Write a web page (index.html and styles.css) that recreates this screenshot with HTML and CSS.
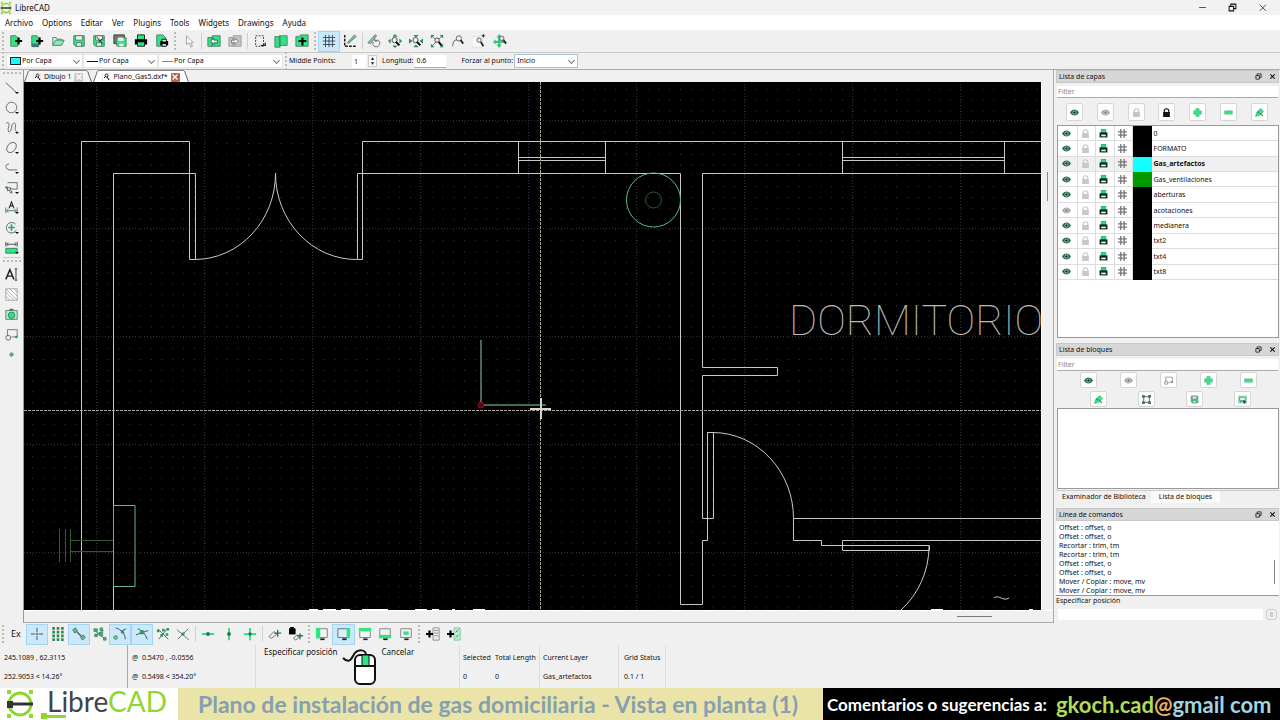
FILE: index.html
```
<!DOCTYPE html>
<html lang="es">
<head>
    <meta charset="UTF-8">
    <meta name="viewport" content="width=device-width, initial-scale=1">
    <title>LibreCAD</title>
    <link rel="stylesheet" href="styles.css">
</head>
<body>

    <!-- Icon set -->
    <svg class="sprite" aria-hidden="true">
        <symbol id="i-logo" viewBox="0 0 16 16"><circle cx="8" cy="8" r="6" fill="none" stroke="#8fd62f" stroke-width="2"/><path d="M1 1h3M12 1h3M1 15h3M12 15h3" stroke="#8fd62f" stroke-width="2"/><path d="M1 8h14" stroke="#333" stroke-width="2"/></symbol>
        <symbol id="i-new" viewBox="0 0 16 16"><path d="M2 2h6l2 2v10H2z" fill="#2de584" stroke="#4a7a60"/><path d="M7 8h8M11 4v8" stroke="#000" stroke-width="2.4"/></symbol>
        <symbol id="i-newt" viewBox="0 0 16 16"><path d="M2 2h6l2 2v10H2z" fill="#2de584" stroke="#4a7a60"/><path d="M2 11h8v4H2z" fill="#477"/><path d="M7 8h8M11 4v8" stroke="#000" stroke-width="2.4"/></symbol>
        <symbol id="i-open" viewBox="0 0 16 16"><path d="M2 13V4h4l1 2h5v2" fill="#dff5e8" stroke="#4a7a60"/><path d="M2 13l3-6h10l-3 6z" fill="#7eeeb2" stroke="#4a7a60"/></symbol>
        <symbol id="i-save" viewBox="0 0 16 16"><path d="M2 2h12v12H4l-2-2z" fill="#2de584" stroke="#4a7a60"/><path d="M4 2h8v5H4zM5 10h6v4H5z" fill="#eee" stroke="#4a7a60"/></symbol>
        <symbol id="i-saveas" viewBox="0 0 16 16"><path d="M2 2h12v12H4l-2-2z" fill="#2de584" stroke="#4a7a60"/><path d="M4 2h8v5H4zM5 10h6v4H5z" fill="#eee" stroke="#4a7a60"/><path d="M5 3l7 8M12 5l-4 4" stroke="#222"/></symbol>
        <symbol id="i-saveall" viewBox="0 0 16 16"><path d="M1 1h12v10H1z" fill="#777" stroke="#333"/><path d="M4 4h11v10H5l-1-1z" fill="#2de584" stroke="#4a7a60"/><path d="M6 4h6v4H6zM7 11h5v3H7z" fill="#eee"/></symbol>
        <symbol id="i-print" viewBox="0 0 16 16"><path d="M4 1h8v6H4z" fill="#2de584" stroke="#111"/><path d="M1 6h14v6H1z" fill="#000"/><path d="M4 9h8v5H4z" fill="#2de584" stroke="#111"/></symbol>
        <symbol id="i-lprint" viewBox="0 0 16 16"><path d="M4 0h8v7H4z" fill="#2dd57c" stroke="#1d8a50"/><path d="M1 6h14v9H1z" fill="#0a2a18"/><path d="M4 10h8v3H4z" fill="#eafff3"/></symbol>
        <symbol id="i-preview" viewBox="0 0 16 16"><path d="M2 1h7l3 3v10H2z" fill="#2de584" stroke="#4a7a60"/><path d="M6 8h9v5H6z" fill="#000"/><path d="M8 6h5v3H8zM8 11h5v3H8z" fill="#d8ffe8" stroke="#000"/></symbol>
        <symbol id="i-arrow" viewBox="0 0 16 16"><path d="M5 2v10l3-2 2 5 2-1-2-4h3z" fill="#fff" stroke="#999"/></symbol>
        <symbol id="i-undo" viewBox="0 0 16 16"><path d="M1 4h5v10H1zM6 2h9v12H6z" fill="#2de584" stroke="#4a7a60"/><path d="M4 8l4-3v2h4v3H8v2z" fill="#fff" stroke="#356"/></symbol>
        <symbol id="i-redo" viewBox="0 0 16 16"><path d="M1 4h5v10H1zM6 2h9v12H6z" fill="#c4c4c4" stroke="#999"/><path d="M12 8L8 5v2H4v3h4v2z" fill="#eee" stroke="#777"/></symbol>
        <symbol id="i-cut" viewBox="0 0 16 16"><path d="M3 2h9v12H3z" fill="none" stroke="#222" stroke-dasharray="2 1.5"/><path d="M9 13h5v-3" fill="none" stroke="#222" stroke-width="1.5"/></symbol>
        <symbol id="i-copy" viewBox="0 0 16 16"><path d="M1 3h6v12H1zM6 2h9v11H6z" fill="#2de584" stroke="#4a7a60"/></symbol>
        <symbol id="i-paste" viewBox="0 0 16 16"><path d="M1 3h4l1-2h9v13H1z" fill="#2de584" stroke="#4a7a60"/><path d="M4 8h9M8.500 4v9" stroke="#000" stroke-width="2.4"/></symbol>
        <symbol id="i-grid" viewBox="0 0 16 16"><path d="M4 1v14M8 1v14M12 1v14M1 4h14M1 8h14M1 12h14" stroke="#345" fill="none"/></symbol>
        <symbol id="i-draft" viewBox="0 0 16 16"><path d="M2 1v13h13" fill="none" stroke="#111" stroke-width="1.6" stroke-dasharray="3 1.5"/><path d="M5 10l8-9 2 2-9 8z" fill="#7ec9a0" stroke="#365" stroke-width=".8"/></symbol>
        <symbol id="i-redraw" viewBox="0 0 16 16"><path d="M1 10l8-9 2 1-7 9z" fill="#8ec9a6" stroke="#365" stroke-width=".8"/><path d="M7 9a4 4 0 1 0 5-2l-3 1M9 5v3h3" fill="none" stroke="#666"/></symbol>
        <symbol id="i-zin" viewBox="0 0 16 16"><path d="M8 0l3 3H5zM8 16l3-3H5zM0 8l3-3v6zM16 8l-3-3v6z" fill="#2c8a56"/><circle cx="7.500" cy="7" r="3" fill="#dff5e8" stroke="#444"/><path d="M9 9l4 4" stroke="#000" stroke-width="2.200"/></symbol>
        <symbol id="i-zout" viewBox="0 0 16 16"><path d="M8 4l3-3H5zM8 12l3 3H5zM4 8L0 5v6zM12 8l4-3v6z" fill="#2c8a56"/><circle cx="7.500" cy="7" r="3" fill="#eee" stroke="#444"/><path d="M9 9l4 4" stroke="#000" stroke-width="2.200"/></symbol>
        <symbol id="i-zauto" viewBox="0 0 16 16"><path d="M2 2l12 12M14 2L2 14" stroke="#567"/><path d="M1 1h4L1 5zM15 1v4l-4-4zM1 15v-4l4 4zM15 15h-4l4-4z" fill="#2c8a56"/><circle cx="8" cy="7" r="2.500" fill="#eee" stroke="#444"/><path d="M10 9l3 4" stroke="#000" stroke-width="2"/></symbol>
        <symbol id="i-zprev" viewBox="0 0 16 16"><path d="M2 14c0-6 2-8 7-7" fill="none" stroke="#555"/><circle cx="9" cy="5" r="3" fill="#eee" stroke="#555"/><path d="M11 7l3 4" stroke="#222" stroke-width="2"/></symbol>
        <symbol id="i-zwin" viewBox="0 0 16 16"><path d="M0 3h12v12H0z" fill="#fafafa" stroke="#ddd"/><circle cx="8" cy="7" r="2.500" fill="#eee" stroke="#555"/><path d="M10 9l3 5" stroke="#222" stroke-width="2"/><path d="M13 0v4M11 2h4" stroke="#222"/></symbol>
        <symbol id="i-zpan" viewBox="0 0 16 16"><path d="M7 2v12M1 9h12" stroke="#32c777" stroke-width="2.400"/><path d="M7 0l3 4H4zM7 16l3-4H4zM0 9l3-3v6z" fill="#32c777"/><circle cx="10" cy="5" r="2.500" fill="#eee" stroke="#555"/><path d="M12 7l3 4" stroke="#222" stroke-width="2"/></symbol>

        <symbol id="i-line" viewBox="0 0 16 16"><path d="M1 2l13 12" stroke="#444"/></symbol>
        <symbol id="i-circle" viewBox="0 0 16 16"><circle cx="8" cy="8" r="6.500" fill="none" stroke="#555"/></symbol>
        <symbol id="i-spline" viewBox="0 0 16 16"><path d="M1 3c4-3 5 1 3 6-1 6 3 6 4 0 0-7 5-9 5-3-1 5 0 7 2 7" fill="none" stroke="#555"/></symbol>
        <symbol id="i-ellipse" viewBox="0 0 16 16"><ellipse cx="8" cy="8" rx="7" ry="5" transform="rotate(-50 8 8)" fill="none" stroke="#555"/></symbol>
        <symbol id="i-poly" viewBox="0 0 16 16"><path d="M5 4c-5-1-5 6 0 7h10" fill="none" stroke="#555"/></symbol>
        <symbol id="i-select" viewBox="0 0 16 16"><path d="M3 2h12v8H8" fill="none" stroke="#555"/><path d="M3 8l5 1-2 1 3 4-2 1-2-4-2 1z" fill="#fff" stroke="#444"/><circle cx="2" cy="8" r="1.600" fill="#2c8a56"/></symbol>
        <symbol id="i-dim" viewBox="0 0 16 16"><path d="M1 8v7M15 8v7M2 12h12M4 10l-2 2 2 2M12 10l2 2-2 2" fill="none" stroke="#3f6c54"/><path d="M5 9l3-8 3 8M6 6h4" fill="none" stroke="#222" stroke-width="1.300"/></symbol>
        <symbol id="i-modify" viewBox="0 0 16 16"><path d="M13 4a6.500 6.500 0 1 0 1 7" fill="none" stroke="#456"/><path d="M8 4v8M4 8h8" stroke="#29a864" stroke-width="2"/></symbol>
        <symbol id="i-info" viewBox="0 0 16 16"><path d="M1 1v6M15 1v6M2 4h12M4 2L2 4l2 2M12 2l2 2-2 2" fill="none" stroke="#333"/><path d="M1 9h14v6H1z" fill="#2de584" stroke="#287a4c"/></symbol>
        <symbol id="i-mtext" viewBox="0 0 16 16"><path d="M1 14L6 2l5 12M3 10h6" fill="none" stroke="#222" stroke-width="1.800"/><path d="M12 1h3M12 15h3M13.500 1v14" stroke="#222"/></symbol>
        <symbol id="i-hatch" viewBox="0 0 16 16"><path d="M1 1h14v14H1z" fill="#fff" stroke="#999"/><path d="M1 5l10 10M1 10l5 5M1 1l14 14M6 1l9 9M11 1l4 4" stroke="#999"/></symbol>
        <symbol id="i-image" viewBox="0 0 16 16"><path d="M1 3h14v11H1z" fill="#bde8cf" stroke="#4a7a60"/><path d="M5 3l1-2h4l1 2z" fill="#4a7a60"/><circle cx="8" cy="9" r="4" fill="#2de584" stroke="#277a4b"/></symbol>
        <symbol id="i-block" viewBox="0 0 16 16"><path d="M3 10V2h12v9H8" fill="none" stroke="#666"/><circle cx="4" cy="12" r="3" fill="#eee" stroke="#555"/><circle cx="14" cy="11" r="1.600" fill="#2c9a5c"/></symbol>
        <symbol id="i-point" viewBox="0 0 16 16"><circle cx="8" cy="8" r="2" fill="#5fc592" stroke="#287a4c"/></symbol>

        <symbol id="i-eye" viewBox="0 0 16 16"><path d="M0 8c4-7 12-7 16 0-4 7-12 7-16 0z" fill="#2a6b45"/><circle cx="8" cy="8" r="3.400" fill="#b9e8cd"/><circle cx="8" cy="8" r="2.200" fill="#123"/></symbol>
        <symbol id="i-eyeoff" viewBox="0 0 16 16"><path d="M0 8c4-7 12-7 16 0-4 7-12 7-16 0z" fill="#aaa"/><circle cx="8" cy="8" r="3.400" fill="#ddd"/><circle cx="8" cy="8" r="2.200" fill="#777"/></symbol>
        <symbol id="i-lock" viewBox="0 0 16 16"><path d="M2 7h12v9H2z" fill="currentColor"/><path d="M4 8V5c0-5 8-5 8 0v3" fill="none" stroke="currentColor" stroke-width="2"/></symbol>
        <symbol id="i-plus" viewBox="0 0 16 16"><path d="M5 1h6v4h4v6h-4v4H5v-4H1V5h4z" fill="#2de584" stroke="#6fb890"/></symbol>
        <symbol id="i-minus" viewBox="0 0 16 16"><path d="M1 5h14v6H1z" fill="#2de584" stroke="#6fb890"/></symbol>
        <symbol id="i-edit" viewBox="0 0 16 16"><path d="M1 15l2-7 7-7 5 5-7 7z" fill="#2de584" stroke="#3a9a68"/><path d="M9 9l5 5M4 6l3 3" stroke="#2c8a56" stroke-width="2"/></symbol>
        <symbol id="i-hash" viewBox="0 0 16 16"><path d="M5 0v16M11 0v16M0 5h16M0 11h16" stroke="#777" stroke-width="2.400"/></symbol>
        <symbol id="i-frame" viewBox="0 0 16 16"><path d="M3 3h10v10H3z" fill="none" stroke="#555" stroke-width="1.500"/><path d="M0 0h5v5H0zM11 0h5v5h-5zM0 11h5v5H0zM11 11h5v5h-5z" fill="#4a7a60"/></symbol>
        <symbol id="i-insert" viewBox="0 0 16 16"><path d="M0 1h16v14H0z" fill="#8fe8b8"/><path d="M3 4h10v6H3z" fill="#eee" stroke="#456"/><path d="M3 12h4M9 10l5 2-3 3z" stroke="#345"/></symbol>

        <symbol id="i-cross" viewBox="0 0 16 16"><path d="M8 1v14M1 8h14" stroke="#345" stroke-dasharray="5 1 2 1"/></symbol>
        <symbol id="i-dots" viewBox="0 0 16 16"><path d="M3 0v16M8 0v16M13 0v16" stroke="#2c8a56" stroke-width="3" stroke-dasharray="3 1.300"/></symbol>
        <symbol id="i-ends" viewBox="0 0 16 16"><path d="M4 4l8 8" stroke="#456" stroke-width="1.500"/><path d="M1 3l3-2 2 3-3 3zM10 12l3-3 2 3-3 3z" fill="#69c594" stroke="#287a4c"/></symbol>
        <symbol id="i-entity" viewBox="0 0 16 16"><path d="M1 3l13 11M4 9l8-5" stroke="#456"/><path d="M1 2h4v3H1zM7 6h4v4H7zM2 8h3v3H2zM12 12h3v3h-3zM8 1h3v3H8z" fill="#3bb574" stroke="#287a4c" stroke-width=".7"/></symbol>
        <symbol id="i-center" viewBox="0 0 16 16"><path d="M3 1c7 2 11 7 11 13M9 5l6-3" fill="none" stroke="#345"/><circle cx="3" cy="12" r="2" fill="#83d6a9" stroke="#287a4c"/><circle cx="11" cy="6" r="1.800" fill="#2c9a5c"/></symbol>
        <symbol id="i-middle" viewBox="0 0 16 16"><path d="M3 2c5 2 9 6 11 12M1 9l14-5" fill="none" stroke="#345"/><circle cx="8" cy="6" r="2.500" fill="#2c9a5c"/></symbol>
        <symbol id="i-dist" viewBox="0 0 16 16"><path d="M2 2l12 12M3 14L13 2" stroke="#456"/><path d="M1 3h3v3H1zM7 2h3v3H7zM5 8h3v3H5zM11 7h3v3h-3zM12 1h3v3h-3z" fill="#2c9a5c"/></symbol>
        <symbol id="i-inter" viewBox="0 0 16 16"><path d="M1 3l14 12M14 2L2 14" stroke="#666"/><circle cx="8" cy="8" r="2" fill="#2c9a5c"/></symbol>
        <symbol id="i-horiz" viewBox="0 0 16 16"><path d="M1 8h14" stroke="#2fd67d" stroke-width="2"/><circle cx="8" cy="8" r="2.200" fill="#277a4b"/></symbol>
        <symbol id="i-vert" viewBox="0 0 16 16"><path d="M8 1v14" stroke="#2fd67d" stroke-width="2"/><circle cx="8" cy="8" r="2.200" fill="#277a4b"/></symbol>
        <symbol id="i-ortho" viewBox="0 0 16 16"><path d="M8 1v14M1 8h14" stroke="#2fd67d" stroke-width="2"/><circle cx="8" cy="8" r="2" fill="#277a4b"/></symbol>
        <symbol id="i-relzero" viewBox="0 0 16 16"><path d="M1 11l6-6 3 3-6 5z" fill="#eee" stroke="#666"/><path d="M7 7h8M11 3v8" stroke="#277a4b" stroke-width="1.600"/></symbol>
        <symbol id="i-lockzero" viewBox="0 0 16 16"><path d="M0 2h7v6H0zM2 2V0h3v2" fill="#000" stroke="#000"/><path d="M5 13l4-4 3 2-4 4z" fill="#eee" stroke="#666"/><path d="M9 10h7M12.500 7v7" stroke="#277a4b" stroke-width="1.600"/></symbol>
        <symbol id="i-dleft" viewBox="0 0 16 16"><path d="M2 2h12v10H2z" fill="#f4f4f4" stroke="#777"/><path d="M1 1h5v12H1z" fill="#2de584"/><path d="M6 14h5" stroke="#222" stroke-width="2"/></symbol>
        <symbol id="i-dright" viewBox="0 0 16 16"><path d="M1 2h13v10H1z" fill="#dfeefa" stroke="#567"/><path d="M11 1h4v12h-4z" fill="#2de584"/><path d="M6 14h5" stroke="#222" stroke-width="2"/></symbol>
        <symbol id="i-dtop" viewBox="0 0 16 16"><path d="M2 2h12v10H2z" fill="#f4f4f4" stroke="#777"/><path d="M1 1h14v4H1z" fill="#2de584"/><path d="M6 14h5" stroke="#222" stroke-width="2"/></symbol>
        <symbol id="i-dbottom" viewBox="0 0 16 16"><path d="M2 2h12v10H2z" fill="#f4f4f4" stroke="#777"/><path d="M1 9h14v4H1z" fill="#2de584"/><path d="M6 14h5" stroke="#222" stroke-width="2"/></symbol>
        <symbol id="i-dfloat" viewBox="0 0 16 16"><path d="M2 2h12v10H2z" fill="#f4f4f4" stroke="#777"/><path d="M5 5h6v4H5z" fill="#2de584"/><path d="M6 14h5" stroke="#222" stroke-width="2"/></symbol>
        <symbol id="i-addmenu" viewBox="0 0 16 16"><path d="M8 1h7v14H8z" fill="#eee" stroke="#888"/><path d="M9 4h5M9 7h5M9 10h5" stroke="#888"/><path d="M0 8h8M4 4v8" stroke="#000" stroke-width="2.500"/></symbol>
        <symbol id="i-addbar" viewBox="0 0 16 16"><path d="M8 1h7v14H8z" fill="#bdeed2" stroke="#7cc59b"/><path d="M10 6l3-3M10 12l3-3" stroke="#287a4c"/><path d="M0 8h8M4 4v8" stroke="#000" stroke-width="2.500"/></symbol>
        <symbol id="i-doc" viewBox="0 0 16 16"><path d="M1 0h13v16H1z" fill="#fff" stroke="#ccc"/><circle cx="9" cy="5" r="3" fill="#ddd" stroke="#333" stroke-width="2"/><path d="M10 8l4 6M7 7l-3 3" stroke="#000" stroke-width="2"/></symbol>
        <symbol id="i-x" viewBox="0 0 16 16"><path d="M3 3l10 10M13 3L3 13" stroke="currentColor" stroke-width="2.500"/></symbol>
        <symbol id="i-restore" viewBox="0 0 16 16"><path d="M2 6h8v8H2zM5 6V2h9v8h-4" fill="none" stroke="currentColor" stroke-width="1.800"/></symbol>
    </svg>

    <header class="titlebar">
        <svg class="app-icon"><use href="#i-logo"/></svg>
        <span>LibreCAD</span>
        <div class="window-buttons">
            <button aria-label="Minimizar"><svg viewBox="0 0 16 16"><path d="M2 8h12" stroke="#333" stroke-width="1.500"/></svg></button>
            <button aria-label="Restaurar"><svg><use href="#i-restore"/></svg></button>
            <button aria-label="Cerrar"><svg viewBox="0 0 16 16"><path d="M3 3l11 11M14 3L3 14" stroke="#333" stroke-width="1.500"/></svg></button>
        </div>
    </header>

    <nav class="menubar">
        <a href="#">Archivo</a>
        <a href="#">Options</a>
        <a href="#">Editar</a>
        <a href="#">Ver</a>
        <a href="#">Plugins</a>
        <a href="#">Tools</a>
        <a href="#">Widgets</a>
        <a href="#">Drawings</a>
        <a href="#">Ayuda</a>
    </nav>

    <div class="toolbar">
        <span class="handle"></span>
        <div class="group n8">
            <button aria-label="Nuevo"><svg><use href="#i-new"/></svg></button>
            <button aria-label="Nuevo desde plantilla"><svg><use href="#i-newt"/></svg></button>
            <button aria-label="Abrir"><svg><use href="#i-open"/></svg></button>
            <button aria-label="Guardar"><svg><use href="#i-save"/></svg></button>
            <button aria-label="Guardar como"><svg><use href="#i-saveas"/></svg></button>
            <button aria-label="Guardar todo"><svg><use href="#i-saveall"/></svg></button>
            <button aria-label="Imprimir"><svg><use href="#i-print"/></svg></button>
            <button aria-label="Vista previa"><svg><use href="#i-preview"/></svg></button>
        </div>
        <span class="handle"></span>
        <div class="group n1">
            <button aria-label="Seleccionar"><svg><use href="#i-arrow"/></svg></button>
        </div>
        <span class="sep"></span>
        <div class="group n2">
            <button aria-label="Deshacer"><svg><use href="#i-undo"/></svg></button>
            <button aria-label="Rehacer"><svg><use href="#i-redo"/></svg></button>
        </div>
        <span class="sep"></span>
        <div class="group n3">
            <button aria-label="Cortar"><svg><use href="#i-cut"/></svg></button>
            <button aria-label="Copiar"><svg><use href="#i-copy"/></svg></button>
            <button aria-label="Pegar"><svg><use href="#i-paste"/></svg></button>
        </div>
        <span class="handle"></span>
        <div class="group n2">
            <button class="on" aria-label="Rejilla"><svg><use href="#i-grid"/></svg></button>
            <button aria-label="Borrador"><svg><use href="#i-draft"/></svg></button>
        </div>
        <span class="sep"></span>
        <div class="group n7">
            <button aria-label="Redibujar"><svg><use href="#i-redraw"/></svg></button>
            <button aria-label="Acercar"><svg><use href="#i-zin"/></svg></button>
            <button aria-label="Alejar"><svg><use href="#i-zout"/></svg></button>
            <button aria-label="Zoom automático"><svg><use href="#i-zauto"/></svg></button>
            <button aria-label="Vista anterior"><svg><use href="#i-zprev"/></svg></button>
            <button aria-label="Zoom ventana"><svg><use href="#i-zwin"/></svg></button>
            <button aria-label="Desplazar"><svg><use href="#i-zpan"/></svg></button>
        </div>
    </div>

    <div class="toolbar options">
        <span class="handle"></span>
        <div class="combo color"><i class="swatch"></i><select aria-label="Color"><option>Por Capa</option></select></div>
        <div class="combo width"><i class="stroke thick"></i><select aria-label="Ancho"><option>Por Capa</option></select></div>
        <div class="combo type"><i class="stroke"></i><select aria-label="Tipo de línea"><option>Por Capa</option></select></div>
        <span class="handle"></span>
        <label class="middle" for="middle">Middle Points:</label>
        <input id="middle" type="text" value="1">
        <div class="spin"><button aria-label="Más">▲</button><button aria-label="Menos">▼</button></div>
        <label for="length">Longitud:</label>
        <input id="length" type="text" value="0.6">
        <label class="force" for="snap">Forzar al punto:</label>
        <div class="combo snap"><select id="snap"><option>Inicio</option></select></div>
    </div>

    <main class="workspace">
        <aside class="tools">
            <span class="hhandle"></span>
            <button class="more" aria-label="Línea"><svg><use href="#i-line"/></svg></button>
            <button class="more" aria-label="Círculo"><svg><use href="#i-circle"/></svg></button>
            <button class="more" aria-label="Curva"><svg><use href="#i-spline"/></svg></button>
            <button class="more" aria-label="Elipse"><svg><use href="#i-ellipse"/></svg></button>
            <button class="more" aria-label="Polilínea"><svg><use href="#i-poly"/></svg></button>
            <button class="more" aria-label="Selección"><svg><use href="#i-select"/></svg></button>
            <button class="more" aria-label="Cota"><svg><use href="#i-dim"/></svg></button>
            <button class="more" aria-label="Modificar"><svg><use href="#i-modify"/></svg></button>
            <button class="more" aria-label="Información"><svg><use href="#i-info"/></svg></button>
            <span class="hhandle second"></span>
            <button aria-label="Texto"><svg><use href="#i-mtext"/></svg></button>
            <button aria-label="Sombreado"><svg><use href="#i-hatch"/></svg></button>
            <button aria-label="Imagen"><svg><use href="#i-image"/></svg></button>
            <button aria-label="Bloque"><svg><use href="#i-block"/></svg></button>
            <button aria-label="Punto"><svg><use href="#i-point"/></svg></button>
        </aside>

        <section class="mdi">
            <div class="tabs">
                <div class="tab"><svg><use href="#i-doc"/></svg><a href="#">Dibujo 1</a><button aria-label="Cerrar Dibujo 1"><svg><use href="#i-x"/></svg></button></div>
                <div class="tab current"><svg><use href="#i-doc"/></svg><a href="#">Plano_Gas5.dxf*</a><button aria-label="Cerrar Plano_Gas5"><svg><use href="#i-x"/></svg></button></div>
            </div>
            <div class="view">
                <svg class="drawing">
                    <defs>
                        <pattern id="minor" x="8" y="7" width="10.800" height="10.800" patternUnits="userSpaceOnUse">
                            <path d="M0 0h1v1H0z" fill="#3c3c3c"/>
                        </pattern>
                        <pattern id="major" x="72" y="38" width="108" height="108" patternUnits="userSpaceOnUse">
                            <path d="M0 .5h108M.5 0v108" stroke="#303030" stroke-dasharray="1 2"/>
                        </pattern>
                    </defs>
                    <rect width="100%" height="100%" fill="url(#minor)"/>
                    <rect width="100%" height="100%" fill="url(#major)"/>
                    <g transform="translate(-24 -82)" fill="none">
                        <!-- walls -->
                        <g stroke="#c8c8c8">
                            <path d="M81.500 611V141.500H189.500V259.500H195.500V173.500H113.500V611"/>
                            <path d="M2000 141.500H362.500V259.500H357.500V173.500H680.500V604.500H702.500V540.500H707.500V432.500H713.500V518.500H702.500V375.500H777.500V367.500H702.500V173.500H2000"/>
                            <path d="M707.500 432v108"/>
                            <path d="M2000 518.500H793.500V540.500H821.500V545.500H929.500V550.500H842.500V540.500H2000"/>
                            <!-- windows -->
                            <path d="M518.500 141v32M605.500 141v32M518 157.500h87M518 160.500h87M842.500 141v32M1004.500 141v32M842 157.500h162M842 160.500h162"/>
                            <!-- door swings -->
                            <path d="M195 259.500A81 86 0 0 0 275.500 173A81 86 0 0 0 357 259.500M713 432.500A81 86 0 0 1 793.500 518.500M929 546A87 87 0 0 1 900 611"/>
                            <path d="M994 598c5-4 9 4 15 0"/>
                        </g>
                        <path d="M309 609.500h9M323 609.500h13M341 609.500h9M362 609.500h26M415 609.500h12M432 609.500h7M452 609.500h3M473 609.500h12M931 609.500h12M1029 609.500h4" stroke="#fff"/>
                        <!-- gas appliances -->
                        <g stroke="#5fb5a0"><path d="M113.500 505.500h21.500v81h-21.500z"/><circle cx="653.500" cy="200" r="27"/></g>
                        <g stroke="#2f5a35"><path d="M59.500 529v33M65.500 529v33M70.500 529v33M70 540.500h43M70 551.500h43"/><circle cx="653.500" cy="200" r="8"/></g>
                        <!-- origin and cursor -->
                        <path d="M481 340v65h65" stroke="#5c8a78" stroke-width="1.500"/>
                        <circle cx="481" cy="405" r="3" fill="#5c0010" stroke="#a01028"/>
                        <path d="M540.500 82V611M24 410.500H2000" stroke="#a8a498" stroke-dasharray="3 1"/>
                        <path d="M530 409h21M541 398v21" stroke="#d8d6c8" stroke-width="2"/>
                        <text class="room" x="789" y="335">DORMITORIO</text>
                    </g>
                </svg>
                <div class="vscroll"><i></i></div>
            </div>
            <div class="hscroll"><i></i></div>
        </section>

        <aside class="docks">
            <section class="dock layers">
                <h2>Lista de capas<span><svg><use href="#i-restore"/></svg><svg><use href="#i-x"/></svg></span></h2>
                <input type="text" placeholder="Filter" aria-label="Filtrar capas">
                <div class="dock-buttons">
                    <button aria-label="Mostrar todo"><svg><use href="#i-eye"/></svg></button>
                    <button aria-label="Ocultar todo"><svg><use href="#i-eyeoff"/></svg></button>
                    <button class="pale" aria-label="Desbloquear"><svg><use href="#i-lock"/></svg></button>
                    <button aria-label="Bloquear"><svg><use href="#i-lock"/></svg></button>
                    <button aria-label="Añadir capa"><svg><use href="#i-plus"/></svg></button>
                    <button aria-label="Quitar capa"><svg><use href="#i-minus"/></svg></button>
                    <button aria-label="Editar capa"><svg><use href="#i-edit"/></svg></button>
                </div>
                <div class="layer-list">
                    <table>
                        <tr><td><svg><use href="#i-eye"/></svg></td><td><svg><use href="#i-lock"/></svg></td><td><svg><use href="#i-lprint"/></svg></td><td><svg><use href="#i-hash"/></svg></td><td class="black"></td><td>0</td></tr>
                        <tr><td><svg><use href="#i-eye"/></svg></td><td><svg><use href="#i-lock"/></svg></td><td><svg><use href="#i-lprint"/></svg></td><td><svg><use href="#i-hash"/></svg></td><td class="black"></td><td>FORMATO</td></tr>
                        <tr class="active"><td><svg><use href="#i-eye"/></svg></td><td><svg><use href="#i-lock"/></svg></td><td><svg><use href="#i-lprint"/></svg></td><td><svg><use href="#i-hash"/></svg></td><td class="cyan"></td><td>Gas_artefactos</td></tr>
                        <tr><td><svg><use href="#i-eye"/></svg></td><td><svg><use href="#i-lock"/></svg></td><td><svg><use href="#i-lprint"/></svg></td><td><svg><use href="#i-hash"/></svg></td><td class="green"></td><td>Gas_ventilaciones</td></tr>
                        <tr><td><svg><use href="#i-eye"/></svg></td><td><svg><use href="#i-lock"/></svg></td><td><svg><use href="#i-lprint"/></svg></td><td><svg><use href="#i-hash"/></svg></td><td class="black"></td><td>aberturas</td></tr>
                        <tr><td><svg><use href="#i-eyeoff"/></svg></td><td><svg><use href="#i-lock"/></svg></td><td><svg><use href="#i-lprint"/></svg></td><td><svg><use href="#i-hash"/></svg></td><td class="black"></td><td>acotaciones</td></tr>
                        <tr><td><svg><use href="#i-eye"/></svg></td><td><svg><use href="#i-lock"/></svg></td><td><svg><use href="#i-lprint"/></svg></td><td><svg><use href="#i-hash"/></svg></td><td class="black"></td><td>medianera</td></tr>
                        <tr><td><svg><use href="#i-eye"/></svg></td><td><svg><use href="#i-lock"/></svg></td><td><svg><use href="#i-lprint"/></svg></td><td><svg><use href="#i-hash"/></svg></td><td class="black"></td><td>txt2</td></tr>
                        <tr><td><svg><use href="#i-eye"/></svg></td><td><svg><use href="#i-lock"/></svg></td><td><svg><use href="#i-lprint"/></svg></td><td><svg><use href="#i-hash"/></svg></td><td class="black"></td><td>txt4</td></tr>
                        <tr><td><svg><use href="#i-eye"/></svg></td><td><svg><use href="#i-lock"/></svg></td><td><svg><use href="#i-lprint"/></svg></td><td><svg><use href="#i-hash"/></svg></td><td class="black"></td><td>txt8</td></tr>
                    </table>
                </div>
            </section>

            <section class="dock blocks">
                <h2>Lista de bloques<span><svg><use href="#i-restore"/></svg><svg><use href="#i-x"/></svg></span></h2>
                <input type="text" placeholder="Filter" aria-label="Filtrar bloques">
                <div class="dock-buttons">
                    <button aria-label="Mostrar bloques"><svg><use href="#i-eye"/></svg></button>
                    <button aria-label="Ocultar bloques"><svg><use href="#i-eyeoff"/></svg></button>
                    <button aria-label="Crear bloque"><svg><use href="#i-block"/></svg></button>
                    <button aria-label="Añadir bloque"><svg><use href="#i-plus"/></svg></button>
                    <button aria-label="Quitar bloque"><svg><use href="#i-minus"/></svg></button>
                </div>
                <div class="dock-buttons four">
                    <button aria-label="Renombrar bloque"><svg><use href="#i-edit"/></svg></button>
                    <button aria-label="Editar bloque"><svg><use href="#i-frame"/></svg></button>
                    <button aria-label="Guardar bloque"><svg><use href="#i-save"/></svg></button>
                    <button aria-label="Insertar bloque"><svg><use href="#i-insert"/></svg></button>
                </div>
                <div class="block-list"></div>
                <div class="dock-tabs"><a href="#">Examinador de Biblioteca</a><a class="current" href="#">Lista de bloques</a></div>
            </section>

            <section class="dock command">
                <h2>Línea de comandos<span><svg><use href="#i-restore"/></svg><svg><use href="#i-x"/></svg></span></h2>
                <div class="log">
                    <div>
                        <p>Offset : offset, o</p>
                        <p>Offset : offset, o</p>
                        <p>Recortar : trim, tm</p>
                        <p>Recortar : trim, tm</p>
                        <p>Offset : offset, o</p>
                        <p>Offset : offset, o</p>
                        <p>Mover / Copiar : move, mv</p>
                        <p>Mover / Copiar : move, mv</p>
                    </div>
                    <i></i>
                </div>
                <label for="cmd">Especificar posición</label>
                <div class="prompt"><input id="cmd" type="text"><button aria-label="Opciones"><i></i></button></div>
            </section>
        </aside>
    </main>

    <div class="toolbar snapbar">
        <span class="handle"></span>
        <div class="group n9">
            <button>Ex</button>
            <button class="on" aria-label="Libre"><svg><use href="#i-cross"/></svg></button>
            <button aria-label="Rejilla"><svg><use href="#i-dots"/></svg></button>
            <button class="on" aria-label="Extremos"><svg><use href="#i-ends"/></svg></button>
            <button aria-label="Entidad"><svg><use href="#i-entity"/></svg></button>
            <button class="on" aria-label="Centro"><svg><use href="#i-center"/></svg></button>
            <button class="on" aria-label="Medio"><svg><use href="#i-middle"/></svg></button>
            <button aria-label="Distancia"><svg><use href="#i-dist"/></svg></button>
            <button aria-label="Intersección"><svg><use href="#i-inter"/></svg></button>
        </div>
        <span class="sep"></span>
        <div class="group n3">
            <button aria-label="Horizontal"><svg><use href="#i-horiz"/></svg></button>
            <button aria-label="Vertical"><svg><use href="#i-vert"/></svg></button>
            <button aria-label="Ortogonal"><svg><use href="#i-ortho"/></svg></button>
        </div>
        <span class="sep"></span>
        <div class="group n2">
            <button aria-label="Cero relativo"><svg><use href="#i-relzero"/></svg></button>
            <button aria-label="Bloquear cero"><svg><use href="#i-lockzero"/></svg></button>
        </div>
        <span class="handle"></span>
        <div class="group n5">
            <button aria-label="Izquierda"><svg><use href="#i-dleft"/></svg></button>
            <button class="on" aria-label="Derecha"><svg><use href="#i-dright"/></svg></button>
            <button aria-label="Arriba"><svg><use href="#i-dtop"/></svg></button>
            <button aria-label="Abajo"><svg><use href="#i-dbottom"/></svg></button>
            <button aria-label="Flotante"><svg><use href="#i-dfloat"/></svg></button>
        </div>
        <span class="handle"></span>
        <div class="group n2">
            <button aria-label="Crear menú"><svg><use href="#i-addmenu"/></svg></button>
            <button aria-label="Crear barra"><svg><use href="#i-addbar"/></svg></button>
        </div>
    </div>

    <div class="status">
        <div class="cell coord dark"><span>245.1089 , 62.3115</span><span>252.9053 &lt; 14.26°</span></div>
        <div class="cell coord"><span>@&nbsp; 0.5470 , -0.0556</span><span>@&nbsp; 0.5498 &lt; 354.20°</span></div>
        <div class="mouse">
            <span>Especificar posición</span>
            <svg viewBox="0 0 36 40"><path d="M1 11c4 4 7 4 10-2 4-8 14-7 13 0" fill="none" stroke="#111" stroke-width="2"/><rect x="13" y="8" width="20" height="29" rx="5" fill="#fff" stroke="#111" stroke-width="2"/><path d="M20 8h7v11h-7z" fill="#2de584" stroke="#111"/><path d="M13 19h20" stroke="#111" stroke-width="2"/></svg>
            <span>Cancelar</span>
        </div>
        <div class="cell selected"><span>Selected</span><span>0</span></div>
        <div class="cell total"><span>Total Length</span><span>0</span></div>
        <div class="cell layer"><span>Current Layer</span><span>Gas_artefactos</span></div>
        <div class="cell grid"><span>Grid Status</span><span>0.1 / 1</span></div>
    </div>

    <footer class="banner">
        <div class="brand">
            <svg class="mark" viewBox="2 2 28 30"><circle cx="16" cy="17" r="11" fill="none" stroke="#8fd62f" stroke-width="3"/><path d="M3 3h4v4H3zM25 3h4v4h-4zM3 27h4v4H3zM25 27h4v4h-4z" fill="#8fd62f"/><path d="M3 14h6v7H3z" fill="#333"/><path d="M8 17h21" stroke="#333" stroke-width="3"/></svg>
            <svg class="key" viewBox="0 0 26 6"><path d="M0 0h6v6H0zM6 2h19v3H6z" fill="#8fd62f"/></svg>
            <span>Libre<b>CAD</b></span>
        </div>
        <div class="title">Plano de instalación de gas domiciliaria - Vista en planta (1)</div>
        <div class="contact"><span>Comentarios o sugerencias a:</span><a href="#"><span class="user">gkoch.cad</span><span class="at">@</span>gmail com</a></div>
    </footer>

</body>
</html>
```
FILE: styles.css
```
* {
    box-sizing: border-box;
}
body {
    margin: 0;
    height: 100vh;
    display: flex;
    flex-direction: column;
    overflow: hidden;
    background: #f0f0f0;
    color: #111;
    font-family: "Noto Sans", "Open Sans", sans-serif;
    font-size: 7px;
    line-height: 10px;
}
button, input, select {
    font: inherit;
    color: inherit;
    margin: 0;
    padding: 0;
    border: 0;
    background: none;
    outline: none;
}
button {
    display: flex;
    align-items: center;
    justify-content: center;
}
a {
    color: inherit;
    text-decoration: none;
}
p, h2 {
    margin: 0;
    font-size: inherit;
    font-weight: normal;
}
svg {
    display: block;
    flex: none;
}
.sprite {
    position: absolute;
    width: 0;
    height: 0;
}

/* title and menu */
.titlebar {
    height: 15px;
    flex: none;
    display: flex;
    align-items: center;
    gap: 3px;
    background: #f2f2f2;
    font-size: 8px;
}
.app-icon {
    width: 12px;
    height: 12px;
}
.window-buttons {
    margin-left: auto;
    display: flex;
    gap: 21px;
    padding-right: 13px;
}
.window-buttons svg {
    width: 9px;
    height: 9px;
}
.menubar {
    height: 15px;
    flex: none;
    display: flex;
    align-items: center;
    gap: 9px;
    padding-left: 5px;
    background: #fff;
    font-size: 8px;
}

/* toolbars */
.toolbar {
    height: 22px;
    flex: none;
    display: flex;
    align-items: center;
}
.handle {
    width: 3px;
    height: 18px;
    margin: 0 1px 0 2px;
    border-left: 2px dotted #bbb;
}
.sep {
    width: 1px;
    height: 16px;
    margin: 0 1px 0 2px;
    background: #d0d0d0;
}
.group {
    display: flex;
    height: 21px;
}
.n1 { width: 21px; }
.n2 { width: 42px; }
.n3 { width: 63px; }
.n5 { width: 104px; }
.n7 { width: 146px; }
.n8 { width: 166px; }
.n9 { width: 187px; }
.group button {
    flex: 1;
    font-size: 9px;
}
.group svg {
    width: 14px;
    height: 14px;
}
.group .on {
    background: #cce8fb;
    border: 1px solid #a5d3f2;
}
.options {
    height: 18px;
    border-top: 1px solid #c8c8c8;
    border-bottom: 1px solid #aaa;
}
.combo {
    position: relative;
    display: flex;
    align-items: center;
    height: 14px;
    padding-left: 3px;
    background: #fff;
    border: 1px solid #e4e4e4;
}
.combo::after {
    content: "";
    position: absolute;
    right: 3px;
    top: 3px;
    width: 4px;
    height: 4px;
    border: solid #777;
    border-width: 0 1px 1px 0;
    transform: rotate(45deg);
}
.combo select {
    appearance: none;
    flex: 1;
    height: 12px;
    padding-left: 1px;
}
.combo.color { width: 77px; }
.combo.width { width: 75px; }
.combo.type { width: 125px; }
.combo.snap {
    width: 64px;
    padding-left: 1px;
    margin-left: 1px;
    border-color: #a8bfd4;
}
.swatch {
    width: 11px;
    height: 8px;
    border: 1px solid #222;
    background: #1ff;
}
.stroke {
    width: 11px;
    height: 1px;
    background: #888;
}
.stroke.thick {
    background: #111;
}
.options input {
    height: 13px;
    padding-left: 2px;
    background: #fff;
}
.options .middle {
    width: 63px;
}
#middle {
    width: 14px;
}
#length {
    width: 32px;
    margin-left: 1px;
    border-bottom: 1px solid #aaa;
}
.spin {
    width: 9px;
    height: 12px;
    margin: 0 5px 0 2px;
    border: 1px solid #ccc;
    background: #fafafa;
}
.spin button {
    width: 7px;
    height: 5px;
    font-size: 5px;
    line-height: 5px;
}
.force {
    margin-left: 15px;
}

/* workspace */
.workspace {
    flex: 1;
    min-height: 0;
    display: flex;
}
.tools {
    width: 24px;
    border-right: 1px solid #999;
}
.hhandle {
    display: block;
    width: 18px;
    height: 7px;
    margin-left: 3px;
    padding-top: 2px;
}
.hhandle::after {
    content: "";
    display: block;
    border-top: 2px dotted #bbb;
}
.hhandle.second {
    border-top: 1px solid #ccc;
}
.tools button {
    position: relative;
    width: 23px;
    height: 20px;
}
.tools svg {
    width: 13px;
    height: 13px;
}
.tools .more::after {
    content: "";
    position: absolute;
    right: 4px;
    bottom: 3px;
    border: 2px solid transparent;
    border-top-color: #111;
    border-bottom: 0;
}
.mdi {
    flex: 1;
    min-width: 0;
    display: flex;
    flex-direction: column;
    border-right: 1px solid #aaa;
    border-bottom: 1px solid #aaa;
}
.tabs {
    height: 12px;
    display: flex;
    padding-left: 5px;
    gap: 11px;
}
.tab {
    position: relative;
    z-index: 0;
    display: flex;
    align-items: center;
    gap: 3px;
    padding: 1px 4px 0 4px;
    border-top: 1px solid #888;
}
.tab::before, .tab::after {
    content: "";
    position: absolute;
    z-index: -1;
    top: 0;
    bottom: 0;
    width: 50%;
    background: #f4f4f4;
}
.tab::before {
    left: -3px;
    border-left: 1px solid #666;
    transform: skewX(-20deg);
}
.tab::after {
    right: -3px;
    border-right: 1px solid #666;
    transform: skewX(20deg);
}
.tab.current::before, .tab.current::after {
    background: #fff;
}
.tab svg {
    width: 8px;
    height: 8px;
}
.tab button {
    width: 9px;
    height: 9px;
    background: #ccc;
    color: #fff;
    border-radius: 1px;
}
.tab.current button {
    background: #c0604a;
}
.view {
    flex: 1;
    min-height: 0;
    display: flex;
}
.drawing {
    flex: 1;
    min-width: 0;
    height: 100%;
    background: #000;
}
.room {
    fill: #bbb;
    font-family: Roboto, sans-serif;
    font-size: 43px;
    font-weight: 100;
}
.vscroll {
    width: 12px;
    padding: 90px 0 0 5px;
    border-left: 1px solid #fff;
}
.vscroll i {
    display: block;
    width: 1px;
    height: 29px;
    background: #888;
}
.hscroll {
    height: 12px;
    padding: 5px 61px 0 0;
    border-top: 1px solid #fff;
}
.hscroll i {
    display: block;
    width: 35px;
    height: 1px;
    margin-left: auto;
    background: #777;
}

/* docks */
.docks {
    width: 226px;
    padding: 0 1px 0 2px;
    display: flex;
    flex-direction: column;
}
.dock {
    display: flex;
    flex-direction: column;
}
.dock h2 {
    height: 13px;
    display: flex;
    align-items: center;
    padding-left: 2px;
    background: #d6d6d6;
    border: 1px solid #c8c8c8;
}
.dock h2 span {
    display: flex;
    gap: 7px;
    margin-left: auto;
    padding-right: 2px;
}
.dock h2 svg {
    width: 7px;
    height: 7px;
}
.dock > input {
    height: 12px;
    margin: 3px 1px 0;
    padding-left: 1px;
    background: #fff;
    border-bottom: 1px solid #aaa;
}
.dock input::placeholder {
    color: #888;
}
.dock-buttons {
    display: flex;
    justify-content: space-around;
    padding: 1px 11px 1px 12px;
}
.dock-buttons button {
    width: 17px;
    height: 16px;
    background: #fdfdfd;
    border: 1px solid #d6d6d6;
    border-radius: 2px;
}
.dock-buttons svg {
    width: 9px;
    height: 9px;
}
.dock-buttons .pale {
    color: #c4c4c4;
}
.dock-buttons.four {
    padding: 2px 12px 1px 18px;
}
.layers .dock-buttons {
    padding: 5px 4px 4px 3px;
}
.layers .dock-buttons button {
    height: 18px;
}
.layers {
    height: 268px;
}
.layer-list {
    flex: 1;
    margin-left: 1px;
    background: #fff;
    border: 1px solid #999;
}
.layer-list table {
    width: 100%;
    height: 154px;
    border-collapse: collapse;
    table-layout: fixed;
}
.layer-list td {
    width: 19px;
    padding: 0 2px 0 0;
    line-height: 9px;
    border-right: 1px solid #ddd;
    border-bottom: 1px solid #ddd;
}
.layer-list td:nth-child(even) {
    width: 18px;
}
.layer-list td:last-child {
    width: auto;
    padding-left: 2px;
    border-right: 0;
}
.layer-list svg {
    width: 9px;
    height: 9px;
    margin: auto;
}
.layer-list td:nth-child(2) {
    color: #c8c8c8;
}
.layer-list .active {
    background: #f0f0f0;
    font-weight: bold;
}
.layer-list .black { background: #000; border-color: #000; }
.layer-list .cyan { background: #1ff; border-color: #1ff; }
.layer-list .green { background: #090; border-color: #090; }
.blocks {
    margin-top: 5px;
}
.block-list {
    height: 81px;
    margin: 0 0 0 1px;
    background: #fff;
    border: 1px solid #999;
}
.dock-tabs {
    display: flex;
    height: 13px;
    margin-top: 1px;
    border-top: 1px solid #ccc;
}
.dock-tabs a {
    padding: 1px 5px 1px 6px;
}
.dock-tabs .current {
    padding: 1px 8px;
    background: #fafafa;
}
.command {
    margin-top: 5px;
}
.log {
    display: flex;
    justify-content: space-between;
    height: 75px;
    padding: 2px 4px 0 3px;
    background: #fff;
    border-bottom: 1px solid #999;
}
.log p {
    line-height: 9px;
}
.log i {
    width: 1px;
    height: 24px;
    margin-top: 37px;
    background: #888;
}
.prompt {
    display: flex;
    gap: 3px;
    padding: 3px 2px 0;
}
.prompt input {
    flex: 1;
    height: 11px;
    background: #fff;
}
.prompt button {
    width: 11px;
    height: 11px;
    border: 1px solid #ccc;
    border-radius: 3px;
}
.prompt i {
    width: 3px;
    height: 5px;
    background: #ccc;
}

/* bottom bars */
.status {
    height: 43px;
    flex: none;
    display: flex;
}
.cell {
    display: flex;
    flex-direction: column;
    gap: 9px;
    padding: 8px 0 0 3px;
    border-right: 1px solid #ddd;
    white-space: nowrap;
}
.coord {
    width: 128px;
    padding-left: 4px;
}
.coord.dark {
    border-color: #aaa;
}
.mouse {
    width: 204px;
    display: flex;
    gap: 4px;
    padding: 2px 0 0 8px;
    border-right: 1px solid #ddd;
    font-size: 8px;
    white-space: nowrap;
}
.mouse svg {
    width: 36px;
    height: 40px;
}
.selected {
    width: 32px;
    border: 0;
}
.total { width: 48px; }
.layer { width: 79px; }
.grid {
    width: 47px;
    padding-left: 5px;
}
.banner {
    height: 32px;
    flex: none;
    display: flex;
    font-family: Lato, sans-serif;
    font-weight: bold;
    white-space: nowrap;
}
.brand {
    position: relative;
    width: 178px;
    display: flex;
    align-items: center;
    gap: 13px;
    padding-left: 6px;
    background: #fff;
    color: #444;
    font-size: 28px;
    line-height: 28px;
    font-weight: normal;
}
.brand span {
    padding-bottom: 6px;
}
.brand b {
    color: #8fd62f;
    font-weight: normal;
}
.mark {
    width: 28px;
    height: 30px;
}
.key {
    position: absolute;
    left: 41px;
    bottom: 1px;
    width: 26px;
    height: 6px;
}
.title {
    width: 645px;
    padding-left: 20px;
    background: #ebe4a9;
    color: #869fb1;
    font-size: 23px;
    line-height: 32px;
}
.contact {
    flex: 1;
    display: flex;
    gap: 9px;
    padding-left: 4px;
    background: #000;
    color: #fff;
    font-size: 17px;
    line-height: 34px;
}
.contact a {
    color: #a4d3e0;
    font-size: 22px;
}
.contact .user { color: #b0dc58; }
.contact .at { color: #e8b060; }
```
